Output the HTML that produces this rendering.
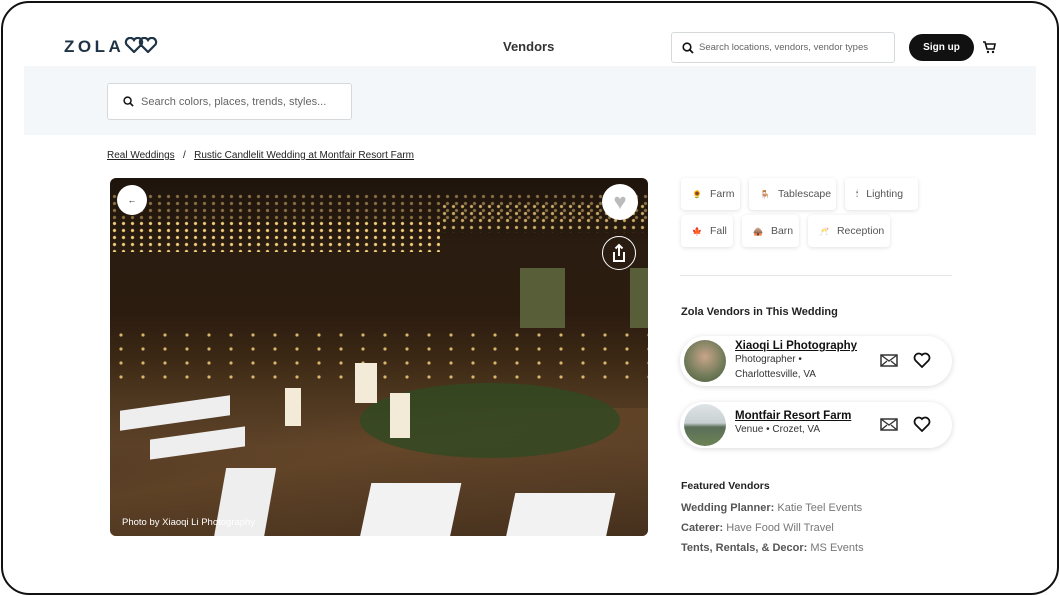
<!DOCTYPE html>
<html><head><meta charset="utf-8"><style>
*{box-sizing:border-box;margin:0;padding:0}
body{width:1060px;height:596px;background:#fff;font-family:"Liberation Sans",sans-serif;color:#222;position:relative;overflow:hidden}
.frame{position:absolute;left:1px;top:1px;width:1058px;height:594px;border:2px solid #111;border-radius:28px}
.abs{position:absolute}
.logo{left:64px;top:37px;font-size:17px;letter-spacing:3.5px;color:#1f3346;font-weight:bold}
.band{left:24px;top:66px;width:1012px;height:69px;background:#f3f7fa}
.search{background:#fff;border:1px solid #d5d9dc;border-radius:3px;display:flex;align-items:center;color:#666}
.chip{position:absolute;height:32px;border-radius:4px;box-shadow:0 1px 4px rgba(0,0,0,.12);font-size:10.5px;color:#555;display:flex;align-items:center;padding-left:11px;background:#fff}
.chip i{font-style:normal;font-size:8px;margin-right:8px}
.vend{position:absolute;left:680px;width:272px;border-radius:26px;box-shadow:0 1px 6px rgba(0,0,0,.15);background:#fff}
.av{position:absolute;left:4px;width:42px;height:42px;border-radius:50%}
.vn{font-size:11.5px;font-weight:bold;text-decoration:underline;color:#111}
.vs{font-size:10px;color:#333;line-height:15px}
.fv{font-size:11px;color:#777;line-height:20px}
.fv b{color:#555}
.lights{position:absolute;background-image:radial-gradient(circle,rgba(255,215,130,.95) 1.2px,transparent 2px);background-size:9px 7px}
</style></head><body>
<div class="frame"></div>
<div class="abs logo">ZOLA</div>
<svg class="abs" style="left:124px;top:37px" width="35" height="16" viewBox="0 0 35 16"><path d="M10 15L2.5 7.5A4 4 0 0 1 10 3a4 4 0 0 1 7.5 4.5z M24 15L16.5 7.5A4 4 0 0 1 24 3a4 4 0 0 1 7.5 4.5z" fill="none" stroke="#1f3346" stroke-width="2.2"/></svg>
<div class="abs" style="left:503px;top:39px;font-size:13px;font-weight:bold;color:#333">Vendors</div>
<div class="abs search" style="left:671px;top:32px;width:224px;height:31px;font-size:9.5px;padding-left:10px">
<svg width="12" height="12" viewBox="0 0 12 12" style="margin-right:5px"><circle cx="5" cy="5" r="3.8" fill="none" stroke="#111" stroke-width="1.6"/><path d="M8 8l3 3" stroke="#111" stroke-width="1.8"/></svg>Search locations, vendors, vendor types</div>
<div class="abs" style="left:909px;top:34px;width:65px;height:27px;border-radius:14px;background:#111;color:#fff;font-size:10px;font-weight:bold;text-align:center;line-height:27px">Sign up</div>
<svg class="abs" style="left:982px;top:41px" width="14" height="13" viewBox="0 0 14 13"><path d="M1 1h2l2 7h7l1-5H4" fill="none" stroke="#111" stroke-width="1.6"/><circle cx="6" cy="11" r="1.2" fill="#111"/><circle cx="11" cy="11" r="1.2" fill="#111"/></svg>
<div class="abs band"></div>
<div class="abs search" style="left:107px;top:83px;width:245px;height:37px;font-size:11px;padding-left:15px">
<svg width="11" height="11" viewBox="0 0 12 12" style="margin-right:7px"><circle cx="5" cy="5" r="3.8" fill="none" stroke="#111" stroke-width="1.6"/><path d="M8 8l3 3" stroke="#111" stroke-width="1.8"/></svg>Search colors, places, trends, styles...</div>
<div class="abs" style="left:107px;top:150px;font-size:10px;color:#222"><u>Real Weddings</u>&nbsp;&nbsp;&nbsp;/&nbsp;&nbsp;&nbsp;<u>Rustic Candlelit Wedding at Montfair Resort Farm</u></div>
<div class="abs" style="left:110px;top:178px;width:538px;height:358px;border-radius:6px;overflow:hidden;background:linear-gradient(180deg,#1e140c 0%,#2a1c10 20%,#2c1c10 38%,#3b2814 50%,#4f3820 62%,#5c4128 75%,#3d2a1a 100%)">
<div class="lights" style="left:0;top:15px;width:538px;height:30px;opacity:.5"></div>
<div class="lights" style="left:0;top:42px;width:330px;height:32px"></div>
<div class="lights" style="left:330px;top:25px;width:208px;height:30px;opacity:.8"></div>
<div class="abs" style="left:410px;top:90px;width:45px;height:60px;background:#6b7a4a;opacity:.7"></div>
<div class="abs" style="left:520px;top:90px;width:18px;height:60px;background:#6b7a4a;opacity:.7"></div>
<div class="lights" style="left:0;top:150px;width:538px;height:60px;background-size:22px 14px;opacity:.85"></div>
<div class="abs" style="left:0;top:230px;width:538px;height:130px;background:linear-gradient(170deg,rgba(0,0,0,0) 20%,#6a4a2a 40%,#4a3420 100%);opacity:.6"></div>
<div class="abs" style="left:10px;top:225px;width:110px;height:20px;background:#eee;transform:skewY(-8deg)"></div>
<div class="abs" style="left:40px;top:255px;width:95px;height:20px;background:#eee;transform:skewY(-8deg)"></div>
<div class="abs" style="left:110px;top:290px;width:50px;height:70px;background:#eee;transform:skewX(-10deg)"></div>
<div class="abs" style="left:255px;top:305px;width:90px;height:60px;background:#f2f2f2;transform:skewX(-12deg)"></div>
<div class="abs" style="left:400px;top:315px;width:100px;height:50px;background:#f2f2f2;transform:skewX(-12deg)"></div>
<div class="abs" style="left:250px;top:205px;width:260px;height:75px;background:#2f4a22;border-radius:50%;opacity:.8"></div>
<div class="abs" style="left:245px;top:185px;width:22px;height:40px;background:#f3ead8"></div>
<div class="abs" style="left:280px;top:215px;width:20px;height:45px;background:#f3ead8"></div>
<div class="abs" style="left:175px;top:210px;width:16px;height:38px;background:#f3ead8"></div>
<div class="abs" style="left:12px;top:339px;color:#fff;font-size:9.5px">Photo by Xiaoqi Li Photography</div>
<div class="abs" style="left:7px;top:7px;width:30px;height:30px;border-radius:50%;background:#fff;font-size:9px;text-align:center;line-height:30px">←</div>
<div class="abs" style="left:492px;top:6px;width:36px;height:36px;border-radius:50%;background:#fff;color:#bbb;font-size:22px;text-align:center;line-height:36px">♥</div>
<div class="abs" style="left:492px;top:58px;width:34px;height:34px;border-radius:50%;border:1.5px solid #fff">
<svg width="34" height="34" viewBox="0 0 34 34" style="margin:-1.5px"><path d="M12 16v9h10v-9M17 9v11M13.5 12.5L17 9l3.5 3.5" fill="none" stroke="#fff" stroke-width="2"/></svg></div>
</div>
<div class="chip" style="left:681px;top:178px;width:59px"><i>🌻</i>Farm</div>
<div class="chip" style="left:749px;top:178px;width:87px"><i>🪑</i>Tablescape</div>
<div class="chip" style="left:845px;top:178px;width:73px"><i>🕯</i>Lighting</div>
<div class="chip" style="left:681px;top:215px;width:52px"><i>🍁</i>Fall</div>
<div class="chip" style="left:742px;top:215px;width:57px"><i>🛖</i>Barn</div>
<div class="chip" style="left:808px;top:215px;width:82px"><i>🥂</i>Reception</div>
<div class="abs" style="left:680px;top:275px;width:272px;height:1px;background:#e6e6e6"></div>
<div class="abs" style="left:681px;top:306px;font-size:11px;font-weight:bold;color:#222">Zola Vendors in This Wedding</div>
<div class="vend" style="top:336px;height:50px"><div class="av" style="top:4px;background:radial-gradient(circle at 50% 40%,#c9a58a,#6f7a58 60%,#4a5a3a)"></div>
<div class="abs" style="left:55px;top:4px"><div class="vn">Xiaoqi Li Photography</div><div class="vs">Photographer •<br>Charlottesville, VA</div></div>
<svg class="abs" style="left:200px;top:18px" width="18" height="13"><rect x="1" y="1" width="16" height="11" fill="none" stroke="#333" stroke-width="1.5"/><path d="M1 1l8 6 8-6M1 12l6-5M17 12l-6-5" fill="none" stroke="#333" stroke-width="1.3"/></svg>
<svg class="abs" style="left:233px;top:16px" width="18" height="16" viewBox="0 0 18 16"><path d="M9 15L2.5 8.5A4 4 0 0 1 9 3a4 4 0 0 1 6.5 5.5z" fill="none" stroke="#111" stroke-width="1.8"/></svg></div>
<div class="vend" style="top:402px;height:46px"><div class="av" style="top:2px;background:linear-gradient(180deg,#dfe4e6 0%,#c8d0d2 45%,#5a6e58 55%,#6c8456 100%)"></div>
<div class="abs" style="left:55px;top:8px"><div class="vn">Montfair Resort Farm</div><div class="vs">Venue • Crozet, VA</div></div>
<svg class="abs" style="left:200px;top:16px" width="18" height="13"><rect x="1" y="1" width="16" height="11" fill="none" stroke="#333" stroke-width="1.5"/><path d="M1 1l8 6 8-6M1 12l6-5M17 12l-6-5" fill="none" stroke="#333" stroke-width="1.3"/></svg>
<svg class="abs" style="left:233px;top:14px" width="18" height="16" viewBox="0 0 18 16"><path d="M9 15L2.5 8.5A4 4 0 0 1 9 3a4 4 0 0 1 6.5 5.5z" fill="none" stroke="#111" stroke-width="1.8"/></svg></div>
<div class="abs" style="left:681px;top:480px;font-size:10.5px;font-weight:bold;color:#222">Featured Vendors</div>
<div class="abs fv" style="left:681px;top:498px"><b>Wedding Planner:</b> Katie Teel Events<br><b>Caterer:</b> Have Food Will Travel<br><b>Tents, Rentals, &amp; Decor:</b> MS Events</div>
</body></html>
